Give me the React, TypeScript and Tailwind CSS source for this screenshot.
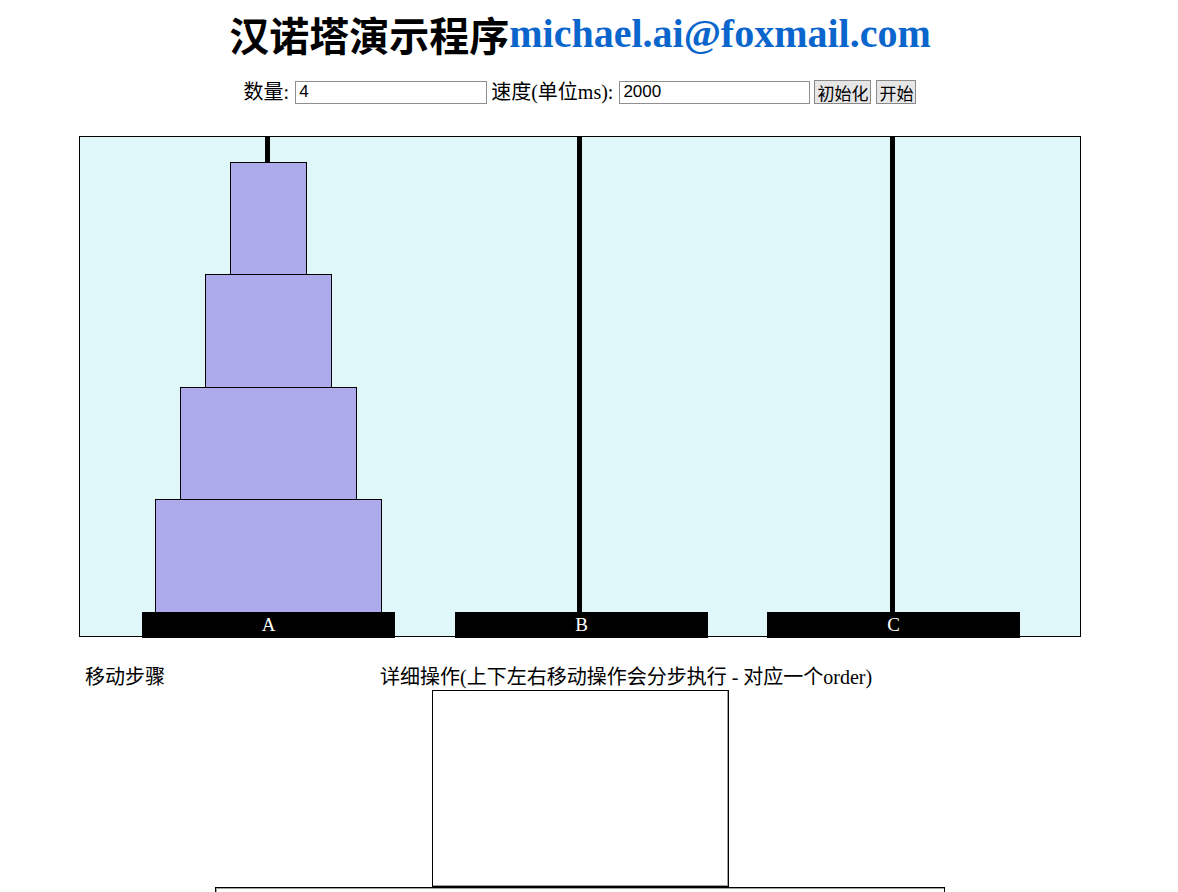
const disks = [
  { left: 150, width: 77, top: 25 },
  { left: 125, width: 127, top: 137 },
  { left: 100, width: 177, top: 250 },
  { left: 75, width: 227, top: 362 },
];

const rods = [
  { rod: "left-[185px]", base: "left-[62px]", label: "A" },
  { rod: "left-[497px]", base: "left-[375px]", label: "B" },
  { rod: "left-[810px]", base: "left-[687px]", label: "C" },
];

export default function App() {
  return (
    <div className="w-[1160px] h-[892px] overflow-hidden bg-white text-black font-['Liberation_Serif','Noto_Sans_CJK_SC',serif]">
      <div className="h-[68px] flex items-center justify-center text-[40px] font-bold leading-none">
        <span className="font-['Noto_Sans_CJK_SC',sans-serif]">汉诺塔演示程序</span>
        <span className="text-[#0a66cc]">michael.ai@foxmail.com</span>
      </div>

      <div className="mt-[5px] h-[38px] flex items-center justify-center text-[20px] leading-none">
        <span>数量:</span>
        <input
          className="ml-[6px] w-[192px] h-[23px] border border-[#8f8f8f] px-[3px] text-[17px] font-['Liberation_Sans',sans-serif] outline-none"
          defaultValue="4"
        />
        <span className="ml-[4px]">速度(单位ms):</span>
        <input
          className="ml-[6px] w-[191px] h-[23px] border border-[#8f8f8f] px-[3px] text-[17px] font-['Liberation_Sans',sans-serif] outline-none"
          defaultValue="2000"
        />
        <button className="ml-[4px] h-[24px] px-[2px] border border-[#8a8a8a] bg-[#e6e6e6] text-[17px] leading-none font-['Noto_Sans_CJK_SC',sans-serif]">
          初始化
        </button>
        <button className="ml-[5px] h-[24px] px-[2px] border border-[#8a8a8a] bg-[#e6e6e6] text-[17px] leading-none font-['Noto_Sans_CJK_SC',sans-serif]">
          开始
        </button>
      </div>

      <div className="mt-[25px] mx-auto w-[1002px] border border-black bg-[#e0f7fa]">
        <div className="relative h-[499px]">
          {rods.map((r) => (
            <div key={r.label}>
              <div className={`absolute top-0 h-[475px] w-[5px] bg-black ${r.rod}`} />
              <div
                className={`absolute top-[475px] h-[26px] w-[253px] bg-black text-white text-[19px] flex items-center justify-center ${r.base}`}
              >
                {r.label}
              </div>
            </div>
          ))}
          {disks.map((d, i) => (
            <div
              key={i}
              className="absolute h-[114px] border border-black bg-[#adabeb]"
              style={{ left: d.left, width: d.width, top: d.top }}
            />
          ))}
        </div>
      </div>

      <div className="mt-[28px] mx-auto w-[1002px] flex text-[20px] leading-[24px]">
        <span className="pl-[6px] w-[301px]">移动步骤</span>
        <span>详细操作(上下左右移动操作会分步执行 - 对应一个order)</span>
      </div>
      <div className="mt-[1px] mx-auto w-[297px] h-[197px] border border-black shadow-[inset_-1px_-1px_0_#a0a0a0]" />
      <div className="mx-auto w-[730px] h-[120px] border border-black shadow-[inset_1px_1px_0_#a0a0a0]" />
    </div>
  );
}
